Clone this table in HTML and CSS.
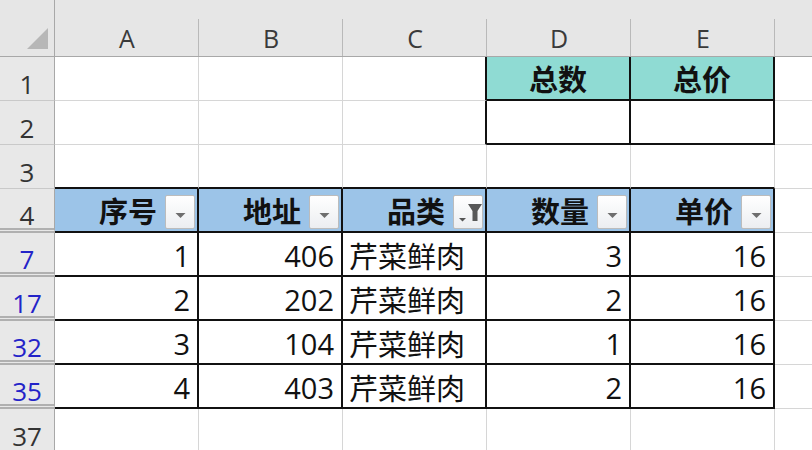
FILE: index.html
```html
<!DOCTYPE html>
<html lang="zh-CN">
<head>
<meta charset="utf-8">
<title>Sheet</title>
<link rel="stylesheet" href="styles.css">
</head>
<body>
<div class="sheet">
  <!-- column header row -->
  <div class="corner"><svg class="corner-tri" width="21" height="21" viewBox="0 0 21 21"><path d="M21 0V21H0Z" fill="#b7b7b7"/></svg></div>
  <div class="colh">A</div>
  <div class="colh">B</div>
  <div class="colh">C</div>
  <div class="colh">D</div>
  <div class="colh">E</div>
  <div class="colh colh-last"></div>

  <!-- row 1 -->
  <div class="rowh">1</div>
  <div class="c"></div>
  <div class="c"></div>
  <div class="c edge-r"></div>
  <div class="c tb teal">总数</div>
  <div class="c tb teal">总价</div>
  <div class="c last"></div>

  <!-- row 2 -->
  <div class="rowh">2</div>
  <div class="c"></div>
  <div class="c"></div>
  <div class="c edge-r"></div>
  <div class="c tb"></div>
  <div class="c tb"></div>
  <div class="c last"></div>

  <!-- row 3 -->
  <div class="rowh">3</div>
  <div class="c edge-b"></div>
  <div class="c edge-b"></div>
  <div class="c edge-b"></div>
  <div class="c edge-b"></div>
  <div class="c edge-b"></div>
  <div class="c last"></div>

  <!-- row 4: table header -->
  <div class="rowh hid-b">4</div>
  <div class="c tb blue"><span>序号</span><span class="dd"><svg width="30" height="34" viewBox="0 0 30 34"><path d="M10.5 18H20.5L15.5 23Z" fill="#6e6e6e"/></svg></span></div>
  <div class="c tb blue"><span>地址</span><span class="dd"><svg width="30" height="34" viewBox="0 0 30 34"><path d="M10.5 18H20.5L15.5 23Z" fill="#6e6e6e"/></svg></span></div>
  <div class="c tb blue"><span>品类</span><span class="dd"><svg width="30" height="34" viewBox="0 0 30 34"><path d="M6 23H13L9.5 26.5Z" fill="#555"/><path d="M15 9H29L24.5 16V26H19.5V16Z" fill="#585858"/></svg></span></div>
  <div class="c tb blue"><span>数量</span><span class="dd"><svg width="30" height="34" viewBox="0 0 30 34"><path d="M10.5 18H20.5L15.5 23Z" fill="#6e6e6e"/></svg></span></div>
  <div class="c tb blue"><span>单价</span><span class="dd"><svg width="30" height="34" viewBox="0 0 30 34"><path d="M10.5 18H20.5L15.5 23Z" fill="#6e6e6e"/></svg></span></div>
  <div class="c last"></div>

  <!-- row 7 -->
  <div class="rowh filt hid-b">7</div>
  <div class="c tb num">1</div>
  <div class="c tb num">406</div>
  <div class="c tb txt">芹菜鲜肉</div>
  <div class="c tb num">3</div>
  <div class="c tb num">16</div>
  <div class="c last"></div>

  <!-- row 17 -->
  <div class="rowh filt hid-b">17</div>
  <div class="c tb num">2</div>
  <div class="c tb num">202</div>
  <div class="c tb txt">芹菜鲜肉</div>
  <div class="c tb num">2</div>
  <div class="c tb num">16</div>
  <div class="c last"></div>

  <!-- row 32 -->
  <div class="rowh filt hid-b">32</div>
  <div class="c tb num">3</div>
  <div class="c tb num">104</div>
  <div class="c tb txt">芹菜鲜肉</div>
  <div class="c tb num">1</div>
  <div class="c tb num">16</div>
  <div class="c last"></div>

  <!-- row 35 -->
  <div class="rowh filt hid-b">35</div>
  <div class="c tb num">4</div>
  <div class="c tb num">403</div>
  <div class="c tb txt">芹菜鲜肉</div>
  <div class="c tb num">2</div>
  <div class="c tb num">16</div>
  <div class="c last"></div>

  <!-- row 37 -->
  <div class="rowh">37</div>
  <div class="c"></div>
  <div class="c"></div>
  <div class="c"></div>
  <div class="c"></div>
  <div class="c"></div>
  <div class="c last"></div>
</div>
</body>
</html>
```

FILE: styles.css
```css
* { box-sizing: border-box; }
html, body {
  margin: 0;
  padding: 0;
  background: #ffffff;
  overflow: hidden;
}
body {
  width: 812px;
  height: 450px;
  font-family: "Noto Sans CJK SC", "Noto Sans", sans-serif;
}
.sheet {
  display: grid;
  grid-template-columns: 55px repeat(5, 144px) 1fr;
  grid-template-rows: 57px repeat(9, 44px);
  width: 812px;
}
.corner {
  background: #e6e6e6;
  border-bottom: 1px solid #a8a8a8;
  border-right: 1px solid #a8a8a8;
  display: flex;
  align-items: flex-end;
  justify-content: flex-end;
  padding: 0 6px 7px 0;
}
.corner-tri { display: block; }
.colh {
  background: linear-gradient(#b9b9b9, #b9b9b9) right bottom / 1px 37px no-repeat, #e6e6e6;
  border-bottom: 1px solid #a8a8a8;
  display: flex;
  align-items: center;
  justify-content: center;
  padding-top: 20px;
  font-family: "Open Sans", "Noto Sans CJK SC", sans-serif;
  font-size: 25px;
  color: #3a3a3a;
  line-height: 1;
}
.colh-last { background: #e6e6e6; }
.rowh {
  background: #e8e8e8;
  border-right: 1px solid #a8a8a8;
  border-bottom: 1px solid #c9c9c9;
  display: flex;
  align-items: flex-end;
  justify-content: center;
  padding-bottom: 3px;
  font-family: "Open Sans", "Noto Sans CJK SC", sans-serif;
  font-size: 26px;
  line-height: 1;
  color: #333;
}
.rowh.filt { color: #2323c8; }
.rowh.hid-b { border-bottom: 5px double #b0b0b0; padding-bottom: 0; }
.c {
  border-right: 1px solid #d6d6d6;
  border-bottom: 1px solid #d6d6d6;
  display: flex;
  align-items: center;
  font-size: 27px;
  line-height: 1;
  color: #111;
}
.c.last { border-right: none; }
.c.edge-r { border-right: 2px solid #111; }
.c.edge-b { border-bottom: 2px solid #111; }
.c.tb {
  border-right: 2px solid #111;
  border-bottom: 2px solid #111;
}
.teal {
  background: #8fdbd3;
  justify-content: center;
  font-weight: 700;
  font-size: 29px;
}
.blue {
  background: #9cc4e8;
  justify-content: flex-end;
  gap: 8px;
  padding-right: 2px;
  font-weight: 700;
  font-size: 29px;
}
.dd {
  flex-shrink: 0;
  width: 30px;
  height: 34px;
  border: 1px solid #bcbcbc;
  border-radius: 2px;
  background: linear-gradient(#ffffff, #eceef1);
  display: flex;
  position: relative;
  top: 2px;
}
.dd svg { display: block; margin: -1px; flex-shrink: 0; }
.num {
  justify-content: flex-end;
  padding-right: 7px;
  padding-top: 2px;
  font-family: "Open Sans", "Noto Sans CJK SC", sans-serif;
  font-size: 29px;
}
.txt {
  justify-content: flex-start;
  padding-left: 6px;
  padding-top: 2px;
  font-size: 29px;
}
```
